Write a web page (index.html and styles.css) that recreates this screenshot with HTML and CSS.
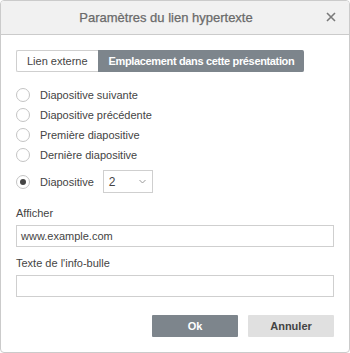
FILE: index.html
```html
<!DOCTYPE html>
<html lang="fr">

<head>
    <meta charset="UTF-8">
    <meta name="viewport" content="width=device-width, initial-scale=1.0">
    <title>Paramètres du lien hypertexte</title>

    <link rel="stylesheet" href="styles.css">
</head>

<body>

    <div class="dialog">
        <!-- Header -->
        <div class="dialog-header">
            <span class="dialog-title">Paramètres du lien hypertexte</span>
            <span class="close-btn">
                <svg width="10" height="10" viewBox="0 0 10 10">
                    <path d="M1 1 L9 9 M9 1 L1 9" stroke="#7a7a7a" stroke-width="1.6" fill="none" />
                </svg>
            </span>
        </div>

        <div class="dialog-body">
            <!-- Tabs -->
            <div class="tabs">
                <button type="button" class="tab">Lien externe</button>
                <button type="button" class="tab active">Emplacement dans cette présentation</button>
            </div>

            <!-- Slide choices -->
            <div class="radio-list">
                <label class="radio-row"><span class="radio"></span>Diapositive suivante</label>
                <label class="radio-row"><span class="radio"></span>Diapositive précédente</label>
                <label class="radio-row"><span class="radio"></span>Première diapositive</label>
                <label class="radio-row"><span class="radio"></span>Dernière diapositive</label>
                <label class="radio-row slide-row">
                    <span class="radio checked"></span>Diapositive
                    <span class="select">
                        <span>2</span>
                        <svg width="7" height="5" viewBox="0 0 7 5">
                            <path d="M0.5 1 L3.5 4 L6.5 1" stroke="#999" stroke-width="1" fill="none" />
                        </svg>
                    </span>
                </label>
            </div>

            <!-- Text fields -->
            <div class="field-label first">Afficher</div>
            <div class="text-input">www.example.com</div>

            <div class="field-label">Texte de l'info-bulle</div>
            <div class="text-input"></div>

            <!-- Footer buttons -->
            <div class="footer">
                <button type="button" class="btn btn-primary">Ok</button>
                <button type="button" class="btn btn-secondary">Annuler</button>
            </div>
        </div>
    </div>

</body>

</html>
```

FILE: styles.css
```css
/* General Styles */
body {
    margin: 0;
    font-family: 'Liberation Sans', Arial, sans-serif;
    font-size: 11px;
    color: #444;
    background: #fff;
}

/* Dialog Window */
.dialog {
    width: 350px;
    height: 353px;
    box-sizing: border-box;
    border: 1px solid #cbcbcb;
    border-radius: 4px;
    overflow: hidden;
    background: #fff;
}

/* Header */
.dialog-header {
    position: relative;
    height: 33px;
    padding-right: 18px;
    display: flex;
    align-items: center;
    justify-content: center;
    background: #f1f1f1;
    border-bottom: 1px solid #cbcbcb;
}

.dialog-title {
    font-size: 13px;
    color: #6a6a6a;
    -webkit-text-stroke: 0.25px #6a6a6a;
}

.close-btn {
    position: absolute;
    right: 13px;
    top: 11px;
    display: flex;
}

/* Body */
.dialog-body {
    padding: 15px 15px 0 15px;
}

/* Tabs */
.tabs {
    display: flex;
}

.tab {
    height: 22px;
    padding: 0 10px;
    font-family: inherit;
    font-size: 11px;
    color: #444;
    background: #fff;
    border: 1px solid #cfcfcf;
    border-right: none;
    border-radius: 2px 0 0 2px;
    cursor: pointer;
}

.tab.active {
    background: #7d858c;
    border-color: #7d858c;
    color: #fff;
    font-weight: bold;
    letter-spacing: -0.35px;
    border-radius: 0 2px 2px 0;
}

/* Radio list */
.radio-list {
    margin-top: 13px;
    display: flex;
    flex-direction: column;
}

.radio-row {
    height: 20px;
    display: flex;
    align-items: center;
}

.radio {
    width: 14px;
    height: 14px;
    box-sizing: border-box;
    border: 1px solid #c4c4c4;
    border-radius: 50%;
    margin-right: 10px;
    display: flex;
    align-items: center;
    justify-content: center;
}

.radio.checked::after {
    content: "";
    width: 6px;
    height: 6px;
    border-radius: 50%;
    background: #444;
}

.slide-row {
    height: 23px;
    margin-top: 5px;
}

.select {
    width: 50px;
    height: 23px;
    box-sizing: border-box;
    margin-left: 9px;
    padding: 0 6px 0 5px;
    border: 1px solid #cfcfcf;
    display: flex;
    align-items: center;
    justify-content: space-between;
    font-size: 12px;
}

/* Fields */
.field-label {
    margin-top: 9px;
    margin-bottom: 5px;
    line-height: 14px;
}

.field-label.first {
    margin-top: 13px;
}

.text-input {
    height: 22px;
    box-sizing: border-box;
    border: 1px solid #cfcfcf;
    padding: 0 4px;
    display: flex;
    align-items: center;
}

/* Footer */
.footer {
    margin-top: 18px;
    display: flex;
    justify-content: flex-end;
    gap: 10px;
}

.btn {
    width: 86px;
    height: 22px;
    border: none;
    border-radius: 1px;
    font-family: inherit;
    font-size: 11px;
    font-weight: bold;
    cursor: pointer;
}

.btn-primary {
    background: #7d858c;
    color: #fff;
}

.btn-secondary {
    background: #e0e0e0;
    color: #444;
}
```
